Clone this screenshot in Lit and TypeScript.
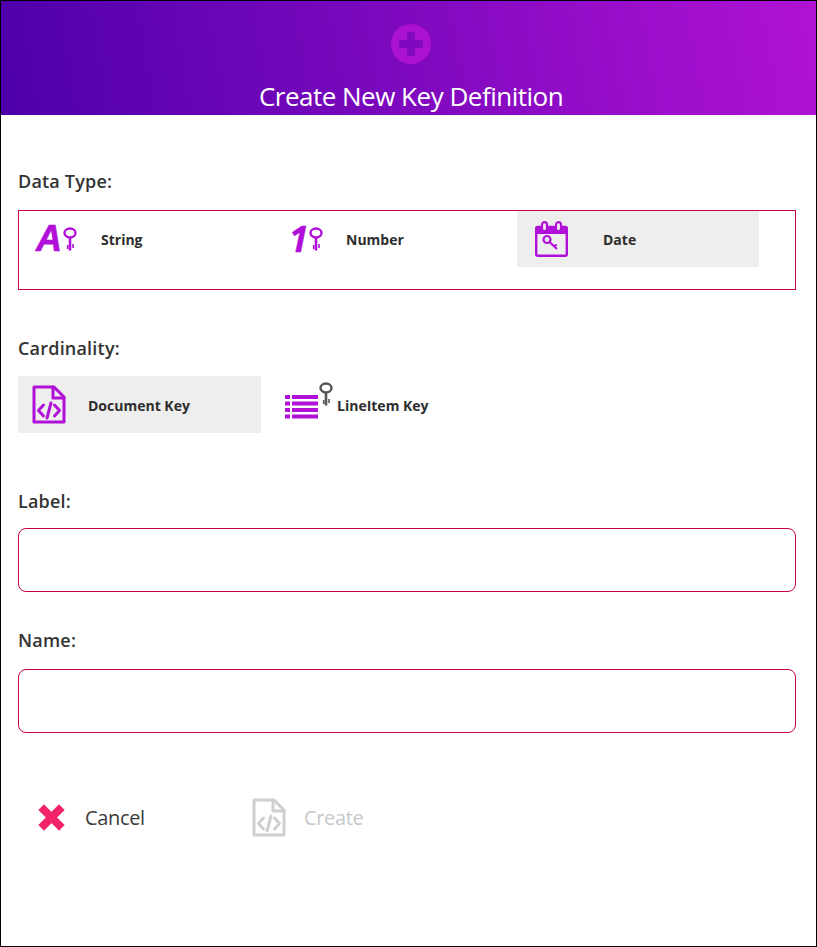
import { LitElement, html, css, svg, unsafeCSS } from "lit";
import { customElement } from "lit/decorators.js";

const P = "#b010d8";
const key = (c: string) => svg`<g fill="none" stroke="${c}" stroke-linecap="butt"><ellipse cx="7" cy="6" rx="5.500" ry="4.500" stroke-width="2.400"/><path d="M7 10.500V23.500" stroke-width="2.600"/><path d="M4.700 18v4M10 17v4" stroke-width="1.600"/></g>`;
const doc = (c: string) => html`<svg width="34" height="39" viewBox="0 0 34 39"><g fill="none" stroke="${c}" stroke-width="3" stroke-linejoin="round" stroke-linecap="round"><path d="M2 2h20l10 10v25H2z"/><path d="M21 2v11h11"/><path d="M11.500 20l-5 5.500 5 5.500M22.500 20l5 5.500-5 5.500M19 18l-4 15"/></g></svg>`;

@customElement("app-root")
export class AppRoot extends LitElement {
  static styles = css`
    :host { display: block; width: 817px; height: 947px; box-sizing: border-box; border: 1px solid #000; background: #fff; font-family: "Open Sans", "Noto Sans", sans-serif; color: #333; overflow: hidden; }
    .head { height: 114px; box-sizing: border-box; padding-left: 5px; background: linear-gradient(80deg, #4d00a8, #b012d4); display: flex; flex-direction: column; align-items: center; color: #fff; }
    .head svg { margin-top: 23px; display: block; }
    .head h1 { margin: 15px 0 0; font-weight: 400; font-size: 26px; line-height: 34px; letter-spacing: -.5px; }
    .body { padding: 0 20px 0 17px; }
    .label { font-size: 18px; font-weight: 600; line-height: 22px; letter-spacing: .2px; }
    .l1 { margin-top: 55px; }
    .types { margin-top: 18px; box-sizing: border-box; height: 80px; width: 778px; border: 1px solid #c8004f; display: flex; gap: 7px; }
    .item { width: 242px; height: 56px; display: flex; align-items: center; font-size: 14px; font-weight: 700; color: #2d2d2d; }
    .cards .item > span { position: relative; top: 1px; }
    .sel { background: #eeeeee; }
    .ico { display: flex; flex: none; align-items: center; }
    .l2 { margin-top: 47px; }
    .cards { margin-top: 17px; display: flex; gap: 0; }
    .cards .item { height: 57px; width: 243px; }
    .l3 { margin-top: 57px; }
    .input { box-sizing: border-box; width: 778px; height: 64px; border: 1px solid #c8004f; border-radius: 8px; }
    .l3 + .input { margin-top: 16px; }
    .l4 { margin-top: 37px; }
    .l4 + .input { margin-top: 18px; }
    .actions { margin-top: 62px; display: flex; align-items: center; height: 44px; font-size: 20px; letter-spacing: -.35px; }
    .btn { display: flex; align-items: center; }
    .cancel { width: 234px; padding-left: 20px; box-sizing: border-box; color: #3c3c3c; }
    .cancel span { margin-left: 20px; }
    .create { color: #c8c8c8; }
    .create span { margin-left: 18px; }
    .big { font-family: "Liberation Sans", Arial, sans-serif; font-style: italic; font-weight: 700; font-size: 36px; line-height: 36px; color: ${unsafeCSS(P)}; -webkit-text-stroke: .7px ${unsafeCSS(P)}; }
    .a { margin-top: -1px; }
    .one { margin-top: -1px; width: 20px; font-family: "Open Sans", sans-serif; font-weight: 700; font-size: 35px; -webkit-text-stroke: .3px ${unsafeCSS(P)}; }
    .k-a { margin-left: 1px; }
    .lines { overflow: visible; }
  `;

  render() {
    return html`
      <div class="head">
        <svg width="40" height="40" viewBox="0 0 40 40"><path fill="#aa12d0" fill-rule="evenodd" d="M20 0a20 20 0 1 1 0 40a20 20 0 1 1 0-40zM18 8a2 2 0 0 0-2 2v6h-6a2 2 0 0 0-2 2v4a2 2 0 0 0 2 2h6v6a2 2 0 0 0 2 2h4a2 2 0 0 0 2-2v-6h6a2 2 0 0 0 2-2v-4a2 2 0 0 0-2-2h-6v-6a2 2 0 0 0-2-2z"/></svg>
        <h1>Create New Key Definition</h1>
      </div>
      <div class="body">
        <div class="label l1">Data Type:</div>
        <div class="types">
          <div class="item">
            <div class="ico" style="margin-left:17px;width:65px">
              <span class="big a">A</span>
              <svg class="k-a" width="14" height="25" viewBox="0 0 14 25">${key(P)}</svg>
            </div>
            <span>String</span>
          </div>
          <div class="item">
            <div class="ico" style="margin-left:21px;width:57px">
              <span class="big one">1</span>
              <svg width="14" height="25" viewBox="0 0 14 25">${key(P)}</svg>
            </div>
            <span>Number</span>
          </div>
          <div class="item sel">
            <div class="ico" style="margin-left:18px;width:68px">
              <svg width="33" height="36" viewBox="0 0 33 36"><g fill="none" stroke="${P}"><rect x="1.200" y="6" width="30.600" height="28.800" rx="1.500" stroke-width="2.400"/><rect x="1" y="6" width="31" height="7" fill="${P}" stroke="none"/><rect x="7" y="1.200" width="5" height="9" rx="2.500" fill="#eee" stroke-width="2.200"/><rect x="21" y="1.200" width="5" height="9" rx="2.500" fill="#eee" stroke-width="2.200"/><circle cx="12" cy="18.500" r="3.500" stroke-width="2.200"/><path d="M14.500 21l7.500 7M19 26l2.500-2.500" stroke-width="2.200"/></g></svg>
            </div>
            <span>Date</span>
          </div>
        </div>
        <div class="label l2">Cardinality:</div>
        <div class="cards">
          <div class="item sel">
            <div class="ico" style="margin-left:14px;width:56px">${doc(P)}</div>
            <span>Document Key</span>
          </div>
          <div class="item">
            <div class="ico" style="margin-left:24px;width:52px;height:40px">
              <svg class="lines" width="52" height="40" viewBox="0 0 52 40">
                <g fill="${P}"><rect x="0" y="10" width="5" height="4"/><rect x="7" y="10" width="26" height="4"/><rect x="0" y="16.500" width="5" height="4"/><rect x="7" y="16.500" width="26" height="4"/><rect x="0" y="23" width="5" height="4"/><rect x="7" y="23" width="26" height="4"/><rect x="0" y="29.500" width="5" height="4"/><rect x="7" y="29.500" width="26" height="4"/></g>
                <g transform="translate(34,-3)">${key("#555")}</g>
              </svg>
            </div>
            <span>LineItem Key</span>
          </div>
        </div>
        <div class="label l3">Label:</div>
        <div class="input"></div>
        <div class="label l4">Name:</div>
        <div class="input"></div>
        <div class="actions">
          <div class="btn cancel">
            <svg width="27" height="27" viewBox="0 0 27 27"><path d="M6 6L21 21M21 6L6 21" stroke="#f02467" stroke-width="8" stroke-linecap="square" fill="none"/></svg>
            <span>Cancel</span>
          </div>
          <div class="btn create">${doc("#cfcfcf")}<span>Create</span></div>
        </div>
      </div>
    `;
  }
}
